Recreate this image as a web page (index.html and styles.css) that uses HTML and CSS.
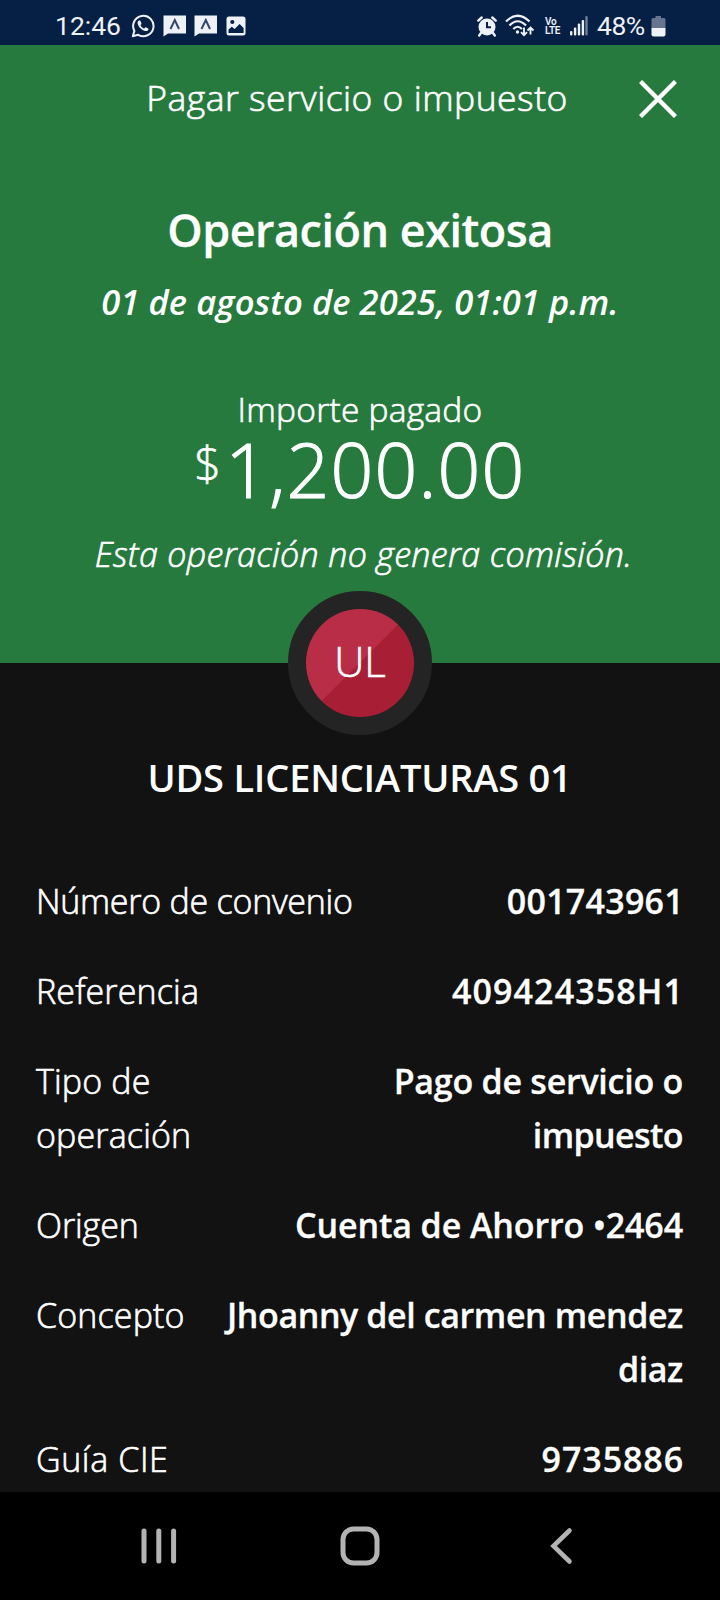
FILE: index.html
```html
<!DOCTYPE html>
<html lang="es">
<head>
<meta charset="utf-8">
<title>Pagar servicio o impuesto</title>
<link rel="stylesheet" href="styles.css">
</head>
<body>
<div class="screen">
  <div class="status">
    <div class="status-left">
      <span class="clock">12:46</span>
      <svg class="ic-wa" width="24" height="24" viewBox="0 0 24 24" fill="none" stroke="#eef1f8" stroke-width="2"><path d="M1.8 22.2 3.4 16.9A10.2 10.2 0 1 1 7.2 20.8Z" stroke-linejoin="round"/><path d="M8.3 6.4c-.9 0-1.9 1.2-1.7 2.8.5 3.500 4.500 7.300 8 7.900 1.600.200 2.900-.900 2.900-2.200 0-.6-2.600-1.800-3-1.700-.6.200-1 1.400-1.500 1.300-1.500-.6-2.700-1.700-3.400-3.100-.1-.5.900-1 .900-1.600 0-.5-1-3.300-1.500-3.400Z" fill="#eef1f8" stroke="none"/></svg>
      <svg class="ic-chat" width="24" height="22" viewBox="0 0 24 22"><path d="M.5.500H23V18.500H5L.5 21.500Z" fill="#eef1f8"/><path d="M7.500 14 11.800 5 16 14" fill="none" stroke="#33466a" stroke-width="2"/></svg>
      <svg class="ic-chat2" width="24" height="22" viewBox="0 0 24 22"><path d="M.5.500H23V18.500H5L.5 21.500Z" fill="#eef1f8"/><path d="M7.500 14 11.800 5 16 14" fill="none" stroke="#33466a" stroke-width="2"/></svg>
      <svg class="ic-img" width="20" height="20" viewBox="0 0 20 20"><rect x=".5" y=".5" width="19" height="19" rx="2.500" fill="#eef1f8"/><circle cx="6.300" cy="6" r="2.100" fill="#052044"/><path d="M2.500 17v-3.500l3.300-2.800 2.800 2.300 5-5 4 4V17Z" fill="#052044"/></svg>
    </div>
    <div class="status-right">
      <svg class="ic-alarm" width="20" height="21" viewBox="0 0 20 21"><circle cx="10" cy="11" r="8.500" fill="#eef1f8"/><path d="M1.300 4.600 4.700 1.500M18.700 4.600 15.300 1.500" stroke="#eef1f8" stroke-width="2.400" stroke-linecap="round"/><path d="M4 17 2.200 19.500M16 17l1.800 2.500" stroke="#eef1f8" stroke-width="2.400" stroke-linecap="round"/><path d="M10 6v5.300h4" fill="none" stroke="#052044" stroke-width="2"/></svg>
      <svg class="ic-wifi" width="30" height="24" viewBox="0 0 30 24" fill="none" stroke="#eef1f8" stroke-width="2.200"><path d="M1 7.500Q12.500-4 24.500 7.500"/><path d="M4.500 11.500Q12.500 3 21 11.500" /><path d="M8.300 15Q12.500 10.500 17 15"/><circle cx="12.500" cy="18" r="1.700" fill="#eef1f8" stroke="none"/><path d="M19 13.500V21M16 18.200l3 3 3-3M25.500 20.500V14M22.500 16.500l3-3 3 3" stroke-width="1.900"/></svg>
      <span class="volte"><span>Vo</span><span>LTE</span></span>
      <svg class="ic-sig" width="18" height="20" viewBox="0 0 18 20" fill="#eef1f8"><rect x="0" y="15" width="2.400" height="4.500" rx="1"/><rect x="3.900" y="11.500" width="2.400" height="8" rx="1"/><rect x="7.800" y="7.500" width="2.400" height="12" rx="1"/><rect x="11.700" y="4" width="2.400" height="15.500" rx="1"/><rect x="15.300" y="0" width="2.400" height="19.500" rx="1" opacity=".45"/></svg>
      <span class="pct">48%</span>
      <svg class="ic-bat" width="15" height="21" viewBox="0 0 15 21"><path d="M4.500 0h5.500v2H13q1.500 0 1.500 1.500V12H.5V3.500Q.5 2 2 2h2.500Z" fill="#66748e"/><path d="M.5 12h14v6.500q0 2-2 2h-10q-2 0-2-2Z" fill="#eef1f8"/></svg>
    </div>
  </div>

  <div class="hero">
    <div class="appbar">
      <h1 class="title">Pagar servicio o impuesto</h1>
      <svg class="close" width="38" height="38" viewBox="0 0 38 38"><path d="M1.500 1.500 36.500 36.500M36.500 1.500 1.500 36.500" stroke="#fff" stroke-width="4.400"/></svg>
    </div>
    <h2 class="result">Operación exitosa</h2>
    <div class="date">01 de agosto de 2025, 01:01 p.m.</div>
    <div class="paid">Importe pagado</div>
    <div class="amount"><span class="currency">$</span><span class="figure">1,200.00</span></div>
    <div class="fee">Esta operación no genera comisión.</div>
    <div class="avatar"><span>UL</span></div>
  </div>

  <div class="body">
    <h3 class="payee">UDS LICENCIATURAS 01</h3>
    <dl class="rows">
      <div class="row"><dt class="agreement">Número de convenio</dt><dd class="digits">001743961</dd></div>
      <div class="row"><dt>Referencia</dt><dd class="ref">409424358H1</dd></div>
      <div class="row"><dt>Tipo de<br>operación</dt><dd>Pago de servicio o<br><span class="tight">impuesto</span></dd></div>
      <div class="row"><dt class="origin">Origen</dt><dd class="account">Cuenta de Ahorro •2464</dd></div>
      <div class="row"><dt>Concepto</dt><dd class="concept">Jhoanny del carmen mendez<br>diaz</dd></div>
      <div class="row"><dt class="cie">Guía CIE</dt><dd class="guide">9735886</dd></div>
    </dl>
  </div>

  <div class="nav">
    <svg width="40" height="40" viewBox="0 0 40 40" stroke="#b3b3b3" stroke-width="5" stroke-linecap="round"><path d="M5 5V35M19.800 5V35M34.600 5V35"/></svg>
    <svg width="40" height="40" viewBox="0 0 40 40" fill="none" stroke="#b3b3b3" stroke-width="5"><rect x="3" y="3" width="34" height="34" rx="10.500"/></svg>
    <svg width="40" height="40" viewBox="0 0 40 40" fill="none" stroke="#b3b3b3" stroke-width="4.600" stroke-linecap="round"><path d="M28.500 4.500 12.500 20 28.500 35.500"/></svg>
  </div>
</div>
</body>
</html>
```
FILE: styles.css
```css
* { box-sizing: border-box; margin: 0; padding: 0; }
body { background: #121212; color: #fff; font-family: "Open Sans", sans-serif; }
svg { display: block; flex: none; }
.screen { width: 720px; height: 1600px; overflow: hidden; display: flex; flex-direction: column; background: #121212; }

.status { height: 45px; flex: none; background: #052044; color: #eef1f8; font-family: Roboto, sans-serif; display: flex; justify-content: space-between; padding: 0 54px 0 55px; }
.status-left, .status-right { display: flex; align-items: flex-start; }
.clock, .pct { font-size: 26.5px; line-height: 52px; white-space: nowrap; }
.clock { width: 76px; }
.ic-wa { margin-top: 14px; }
.ic-chat { margin: 15px 0 0 8px; }
.ic-chat2 { margin: 15px 0 0 7px; }
.ic-img { margin: 16px 0 0 8px; }
.ic-alarm { margin-top: 16px; }
.ic-wifi { margin: 14px 0 0 8px; }
.volte { display: flex; flex-direction: column; width: 17px; margin: 17px 0 0 10px; font-size: 10px; line-height: 9px; font-weight: 600; letter-spacing: -.3px; }
.ic-sig { margin: 16px 0 0 8px; }
.pct { margin-left: 9px; width: 50px; letter-spacing: -.5px; }
.ic-bat { margin: 16px 0 0 4px; }

.hero { position: relative; height: 618px; flex: none; background: #277a3e; text-align: center; white-space: nowrap; }
.appbar { height: 102px; display: grid; grid-template-columns: 44px 1fr 44px; align-items: center; padding: 2px 43px 0 37px; }
.title { grid-column: 2; font-size: 35.5px; font-weight: 300; line-height: 98px; letter-spacing: .5px; -webkit-text-stroke: .65px #fff; }
.close { margin-top: 3px; justify-self: end; }
.result { margin-top: 53px; font-size: 45px; font-weight: 600; line-height: 60px; letter-spacing: -.5px; -webkit-text-stroke: .3px #fff; }
.date { margin-top: 18px; font-size: 34.5px; font-weight: 600; font-style: italic; line-height: 48px; letter-spacing: .08px; }
.paid { margin-top: 63px; font-size: 33.5px; font-weight: 300; line-height: 40px; letter-spacing: .25px; -webkit-text-stroke: .65px #fff; }
.amount { height: 80px; display: flex; justify-content: center; align-items: flex-start; font-weight: 300; }
.currency { font-size: 47px; line-height: 69px; margin-right: 4px; -webkit-text-stroke: .6px #fff; }
.figure { font-size: 75px; line-height: 81px; letter-spacing: 1.2px; -webkit-text-stroke: 1.2px #fff; }
.fee { margin-top: 23px; padding-left: 7px; font-size: 34px; font-weight: 300; font-style: italic; line-height: 44px; letter-spacing: .35px; -webkit-text-stroke: .65px #fff; }
.avatar { position: absolute; left: 288px; bottom: -72px; width: 144px; height: 144px; border: 18px solid #242424; border-radius: 50%; background: #242424; }
.avatar span { display: block; border-radius: 50%; background: linear-gradient(135deg, #b92e46 50%, #a81f35 50%); font-size: 42px; font-weight: 300; line-height: 104px; height: 108px; -webkit-text-stroke: .6px #fff; }

.body { flex: 1; min-height: 0; overflow: hidden; padding: 89px 37px 0 36px; }
.payee { text-align: center; font-size: 38px; font-weight: 600; line-height: 50px; letter-spacing: -.2px; white-space: nowrap; }
.rows { margin-top: 72px; display: flex; flex-direction: column; gap: 36px; }
.row { display: flex; justify-content: space-between; font-size: 34px; line-height: 54px; white-space: nowrap; }
.row dt { font-weight: 300; letter-spacing: .15px; -webkit-text-stroke: .65px #fff; }
.row .agreement { letter-spacing: -.25px; }
.row .origin { letter-spacing: -.1px; }
.row .cie { letter-spacing: .6px; }
.row dd { font-weight: 600; text-align: right; letter-spacing: -.25px; -webkit-text-stroke: .3px #fff; }
.row .digits { letter-spacing: .25px; margin-right: -1px; }
.row .ref { letter-spacing: 1.1px; margin-right: -1px; }
.row .account { letter-spacing: -.1px; }
.row .concept { letter-spacing: -.4px; }
.row .guide { letter-spacing: .9px; margin-right: -1px; }
.row .tight { letter-spacing: -.6px; }

.nav { height: 108px; flex: none; background: #000; display: flex; justify-content: space-between; padding: 34px 139px; }
```
